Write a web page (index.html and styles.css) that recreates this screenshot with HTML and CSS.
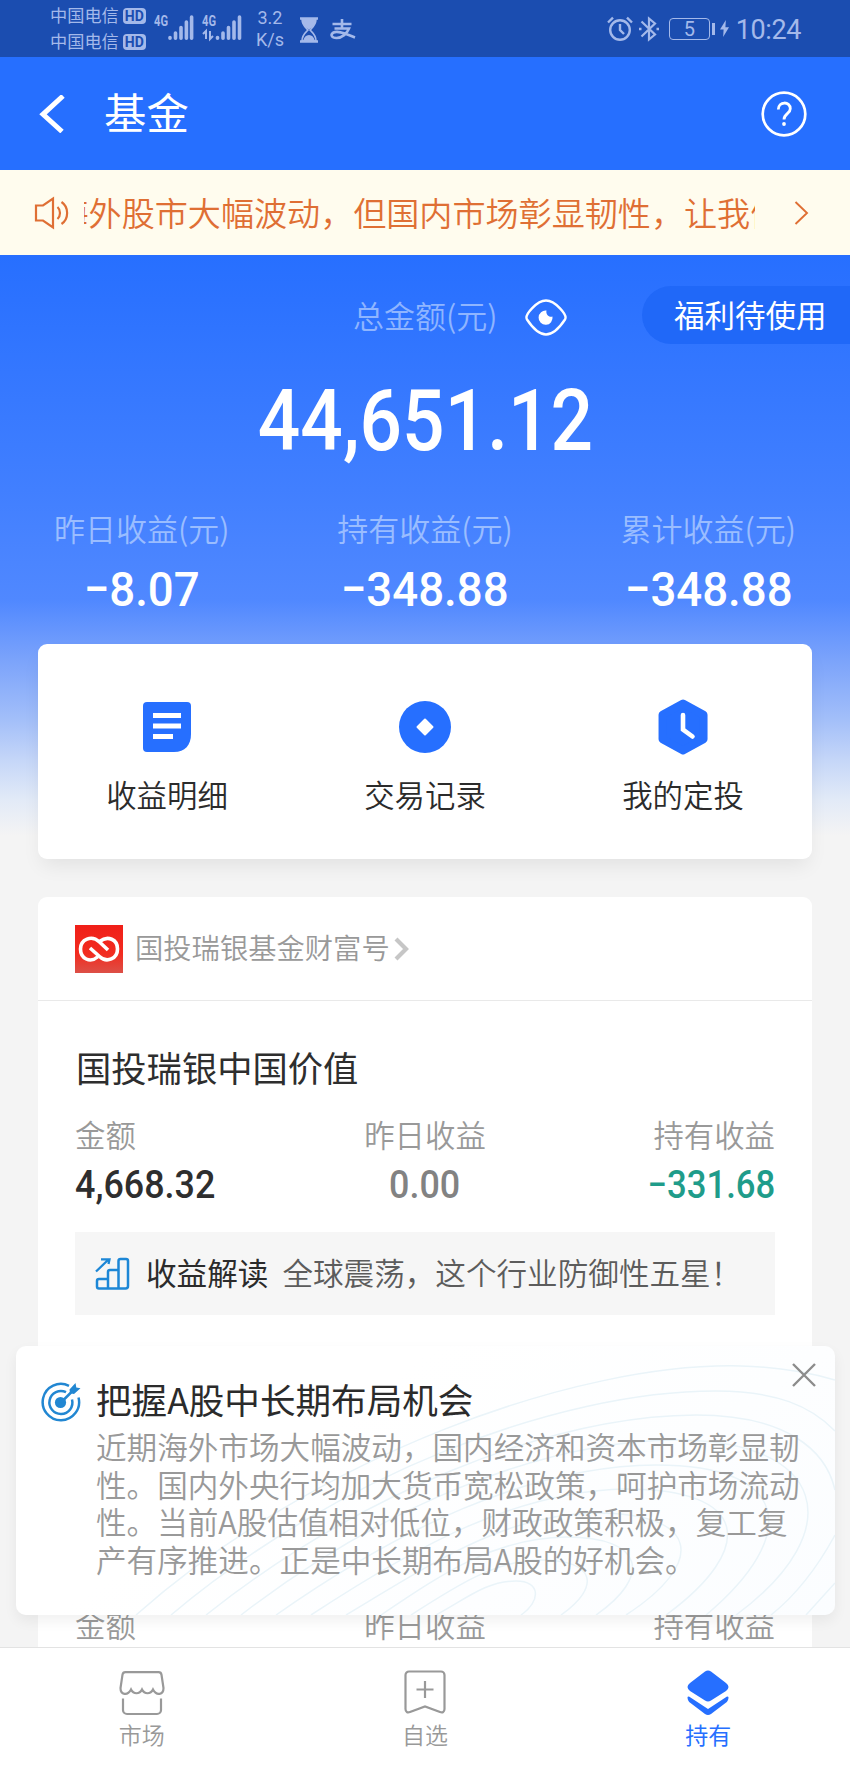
FILE: index.html
```html
<!DOCTYPE html>
<html lang="zh-CN">
<head>
<meta charset="utf-8">
<title>基金</title>
<link rel="stylesheet" href="styles.css">
</head>
<body>
<div class="phone">
  <header class="status">
    <div class="carriers">
      <div class="carrier">中国电信<span class="hd">HD</span></div>
      <div class="carrier">中国电信<span class="hd">HD</span></div>
    </div>
    <svg class="signals" width="90" height="30" viewBox="0 0 90 30">
      <g class="net"><text x="0" y="13" textLength="14" lengthAdjust="spacingAndGlyphs">4G</text><text x="48" y="13" textLength="14" lengthAdjust="spacingAndGlyphs">4G</text></g>
      <g stroke="currentColor" stroke-width="3.6" stroke-linecap="round">
        <path d="M16 24.6v.6M21.500 20v5.200M27 14.500v10.700M32.400 9v16.200M37.600 4v21.200"/>
        <path d="M63.500 24.600v.6M69 20v5.200M74.500 14.500v10.700M80 9v16.200M85.500 4v21.200"/>
      </g>
      <path d="M52 26v-8l-3 3M56 18v8l3-3" fill="none" stroke="currentColor" stroke-width="2"/>
    </svg>
    <div class="speed"><span>3.2</span><span>K/s</span></div>
    <svg class="hourglass" width="20" height="26" viewBox="0 0 20 26"><path d="M1 1.500h18M1 24.500h18" stroke="currentColor" stroke-width="2.400"/><path d="M3 2h14c0 6-3 8-6 11 3 3 6 5 6 11H3c0-6 3-8 6-11C6 10 3 8 3 2z" fill="none" stroke="currentColor" stroke-width="1.600"/><path d="M3 2h14c0 6-3 8-7 10.500C6 10 3 8 3 2zM4 24c1-4 3-6 6-6s5 2 6 6z" fill="currentColor"/></svg>
    <svg class="pay" width="26" height="22" viewBox="0 0 26 22" fill="none" stroke="currentColor" stroke-width="2.600"><path d="M2.500 5h19M12 0v9.500M4.500 9.500h14.500c-2 5-7 9.500-12.500 9.500-5 0-6.500-3.500-3-5.500 5-2.500 12 1.500 21.500 5"/></svg>
    <div class="status-right">
      <svg width="26" height="26" viewBox="0 0 26 26" fill="none" stroke="currentColor" stroke-width="2.400"><circle cx="13" cy="14" r="9.800"/><path d="M13 8v6l4 4M1 6.500l5-4.800M25 6.500l-5-4.800"/></svg>
      <svg class="bt" width="20" height="26" viewBox="0 0 20 26" fill="none" stroke="currentColor" stroke-width="2.200"><path d="M2.500 5.500L16 18.500l-6 5V2.500l6 5L2.500 20.500"/><path d="M0 13h2.500M17.500 13H20" stroke-width="2.600"/></svg>
      <div class="battery">5</div>
      <i class="battery-tip"></i>
      <svg class="bolt" width="9" height="19" viewBox="0 0 10 19"><path d="M6.500 0L0 10.500h4L3.500 19 10 8H6z" fill="currentColor"/></svg>
      <span class="clock">10:24</span>
    </div>
  </header>

  <nav class="nav">
    <svg width="26" height="38" viewBox="0 0 26 38"><path d="M24 1L4 19.300 23 36.500" fill="none" stroke="#fff" stroke-width="5"/></svg>
    <h1>基金</h1>
    <svg class="help" width="46" height="46" viewBox="0 0 46 46" fill="none" stroke="#fff"><circle cx="23" cy="23" r="21.300" stroke-width="2.700"/><path d="M17.300 18.500c0-8.500 12-8.500 12-.8 0 5-6.300 5-6.300 10.800" stroke-width="2.800"/><circle cx="23" cy="33" r="1.900" fill="#fff" stroke="none"/></svg>
  </nav>

  <div class="notice">
    <svg width="35" height="34" viewBox="0 0 35 34" fill="none" stroke="#df6f34" stroke-width="2.200"><path d="M2 9.500h7L19 2.500v29L9 24.500H2z"/><path d="M23.500 11c3.300 3 3.300 9 0 12M27.500 6c7.500 5 7.500 17 0 22"/></svg>
    <div class="ticker"><span>海外股市大幅波动，但国内市场彰显韧性，让我们</span></div>
    <svg class="more" width="15" height="24" viewBox="0 0 15 24"><path d="M1.500 1L13 12 1.500 23" fill="none" stroke="#df6f34" stroke-width="1.900"/></svg>
  </div>

  <main class="main">
    <section class="hero">
      <div class="total-row">
        <span class="total-label">总金额(元)</span>
        <svg width="42" height="38" viewBox="0 0 42 38"><path d="M2 20.500C-1 16 12 1.500 21 1.500S43 16 40 20.500C37 25 30 35.500 21 35.500S5 25 2 20.500z" fill="none" stroke="#fff" stroke-width="2.400"/><path d="M21.500 11.500a7 7.200 0 1 0 6 6c-3 1.500-7-2-6-6z" fill="#fff"/></svg>
      </div>
      <div class="benefit">福利待使用</div>
      <div class="amount"><span>44,651.12</span></div>
      <div class="stats">
        <div><label>昨日收益(元)</label><b>−8.07</b></div>
        <div><label>持有收益(元)</label><b>−348.88</b></div>
        <div><label>累计收益(元)</label><b>−348.88</b></div>
      </div>
    </section>

    <section class="card actions">
      <div class="action">
        <svg width="56" height="56" viewBox="0 0 56 56"><path d="M8 3h40a4 4 0 0 1 4 4v28c0 11-6 18-17 18H8a4 4 0 0 1-4-4V7a4 4 0 0 1 4-4z" fill="#266fff"/><path d="M14 16.500h28M14 27h28M14 37.500h20" stroke="#fff" stroke-width="5"/></svg>
        <span>收益明细</span>
      </div>
      <div class="action">
        <svg width="56" height="56" viewBox="0 0 56 56"><circle cx="28" cy="28" r="26" fill="#266fff"/><path d="M28 20.500l7.500 7.500-7.500 7.500-7.500-7.500z" fill="#fff" stroke="#fff" stroke-width="2" stroke-linejoin="round"/></svg>
        <span>交易记录</span>
      </div>
      <div class="action">
        <svg width="56" height="56" viewBox="0 0 56 56"><path d="M28 4l21 11.500v25L28 52 7 40.500v-25z" fill="#266fff" stroke="#266fff" stroke-width="8" stroke-linejoin="round" transform="translate(.6 .6) scale(.98)"/><path d="M28 16v14.500l9.500 7" fill="none" stroke="#fff" stroke-width="4.600" stroke-linecap="round"/></svg>
        <span>我的定投</span>
      </div>
    </section>

    <section class="card funds">
      <div class="brand">
        <svg class="logo" width="48" height="48" viewBox="0 0 48 48"><defs><linearGradient id="red" x2="0" y2="1"><stop offset="0" stop-color="#f01f18"/><stop offset=".6" stop-color="#f22c20"/><stop offset="1" stop-color="#dc5047"/></linearGradient></defs><rect width="48" height="48" fill="url(#red)"/><path d="M15 23l9.500 8.500C32 38.500 42.500 33.500 42.500 24S33 10 24.500 16.500M33 25l-8.500-8C16.500 9.500 5.500 14.500 5.500 24S15 38.500 22.500 32" fill="none" stroke="#fff" stroke-width="3.600"/></svg>
        <span>国投瑞银基金财富号</span>
        <svg class="brand-more" width="15" height="24" viewBox="0 0 15 24"><path d="M2 2l10 10L2 22" fill="none" stroke="#c6c6c6" stroke-width="4.200"/></svg>
      </div>
      <div class="fund">
        <h2>国投瑞银中国价值</h2>
        <div class="figures">
          <div><label>金额</label><b>4,668.32</b></div>
          <div class="mid"><label>昨日收益</label><b class="flat">0.00</b></div>
          <div class="end"><label>持有收益</label><b class="down">−331.68</b></div>
        </div>
        <div class="insight">
          <svg width="35" height="33" viewBox="0 0 35 33" fill="none" stroke="#1d87d6" stroke-width="2.500"><path d="M2 29.500V24a2 2 0 0 1 2-2h9V15a2 2 0 0 1 2-2h8.500V4a2 2 0 0 1 2-2H31a2 2 0 0 1 2 2v25a2.500 2.500 0 0 1-2.500 2.500H4A2 2 0 0 1 2 29.500zM13 22v9.500M23.500 13v18.500"/><path d="M1 14.500L13.500 2.500M6 2.300h8.500l-1 4.700" stroke-width="2.300"/></svg>
          <strong>收益解读</strong><span>全球震荡，这个行业防御性五星！</span>
        </div>
      </div>
      <div class="fund next">
        <div class="figures">
          <div><label>金额</label></div>
          <div class="mid"><label>昨日收益</label></div>
          <div class="end"><label>持有收益</label></div>
        </div>
      </div>
    </section>
  </main>

  <aside class="tip">
    <svg class="waves" width="819" height="269" viewBox="0 0 819 269" fill="none" stroke="#eaf4f9" stroke-width="1.500">
      <path d="M120 269C300 110 560 16 725 20c40 1 70 7 94 14"/>
      <path d="M155 269C320 130 540 45 700 45c60 0 95 15 119 40"/>
      <path d="M190 269C340 150 530 70 680 69c90 0 130 35 139 75"/>
      <path d="M225 269C360 165 520 95 660 94c150 0 175 90 60 175"/>
      <path d="M260 269C380 185 510 120 640 119c135 0 145 70 50 150"/>
      <path d="M295 269C400 200 500 145 610 143c125 0 130 60 40 126"/>
      <path d="M330 269C420 215 490 168 580 167c105 0 110 50 30 102"/>
      <path d="M365 269C430 225 480 192 550 191c80 0 85 40 30 78"/>
      <path d="M395 269C440 240 480 214 525 214c55 0 60 27 20 55"/>
      <path d="M420 269c30-16 50-34 80-34 25 0 25 20 5 34"/>
      <path d="M755 269c25-20 45-45 64-80M790 269l29-32"/>
    </svg>
    <svg class="target" width="40" height="40" viewBox="0 0 40 40" fill="none" stroke="#2287d2" stroke-width="2.500"><path d="M28 3.800A18.200 18.200 0 1 0 37.500 15.500"/><path d="M25 10.200A11.500 11.500 0 1 0 31 17.500"/><circle cx="19.500" cy="20.500" r="5.600" fill="#2287d2" stroke="none"/><path d="M20 20.500L33 7.500"/><path d="M28.500 7.500L34.500 1l.8 4.500 4.200.8L33 12l-4-.8z" fill="#2287d2" stroke="none"/></svg>
    <div class="tip-text">
      <h3>把握A股中长期布局机会</h3>
      <p>近期海外市场大幅波动，国内经济和资本市场彰显韧<br>性。国内外央行均加大货币宽松政策，呵护市场流动<br>性。当前A股估值相对低位，财政政策积极，复工复<br>产有序推进。正是中长期布局A股的好机会。</p>
    </div>
    <svg class="close" width="24" height="24" viewBox="0 0 24 24"><path d="M1 1l22 22M23 1L1 23" stroke="#8c8c8c" stroke-width="2.400"/></svg>
  </aside>

  <footer class="tabs">
    <div class="tab">
      <svg width="46" height="46" viewBox="0 0 46 46" fill="none" stroke="#999" stroke-width="2.200"><path d="M6.500 2.200h33a3 3 0 0 1 3 2.500L44.500 18c0 7-7 8-10.500 1.500-2.500 5-8.500 5-11 0-2.500 5-8.500 5-11 0C8.500 26 1.500 25 1.500 18L3.500 4.700a3 3 0 0 1 3-2.500zM4 28.500V40a4 4 0 0 0 4 4h30a4 4 0 0 0 4-4V28.500"/></svg>
      <span>市场</span>
    </div>
    <div class="tab">
      <svg width="46" height="46" viewBox="0 0 46 46" fill="none" stroke="#999" stroke-width="2.200"><path d="M7 1.500h32a3.500 3.500 0 0 1 3.500 3.500v34c0 3-2 4-4.500 3L23 36.500 8 42c-2.500 1-4.500 0-4.500-3V5A3.500 3.500 0 0 1 7 1.500zM23 11v17M14.500 19.500h17"/></svg>
      <span>自选</span>
    </div>
    <div class="tab on">
      <svg width="46" height="46" viewBox="0 0 46 46" fill="#266fff"><path d="M20 1.500q3-2 6 0l15 11.500q5 4 0 8L26 30.500q-3 2-6 0L5 21q-5-4 0-8z"/><path d="M2.500 27q1-1 3 .5L23 39l17.500-11.500q2-1.500 3-.5 0 4-3 6L26 44q-3 2-6 0L5.500 33q-3-2-3-6z"/></svg>
      <span>持有</span>
    </div>
  </footer>
</div>
</body>
</html>
```
FILE: styles.css
```css
* { box-sizing: border-box; }
body { margin: 0; font-family: "Noto Sans CJK SC", sans-serif; font-weight: 350; }
h1, h2, h3, p { margin: 0; font-weight: 400; }
svg { display: block; flex: none; }
.phone { position: relative; width: 850px; height: 1766px; overflow: hidden; display: flex; flex-direction: column; background: #f4f4f4; white-space: nowrap; }

.status { height: 57px; flex: none; display: flex; align-items: center; padding: 0 49px 0 50px; background: #1b4db0; color: #a4b9ea; font-family: Roboto, "Noto Sans CJK SC", sans-serif; }
.carriers { width: 96px; padding-top: 1px; }
.carrier { display: flex; align-items: center; height: 26px; font-size: 17.2px; line-height: 26px; gap: 4px; font-weight: 400; }
.hd { width: 23px; height: 16px; border-radius: 4px; background: #a4b9ea; color: #1b4db0; font-size: 14px; line-height: 16px; font-weight: 700; text-align: center; }
.signals { margin: 0 0 1px 8px; }
.net { font: 700 14px Roboto, sans-serif; fill: currentColor; }
.speed { width: 28px; margin-left: 12px; display: flex; flex-direction: column; align-items: center; font-size: 18px; line-height: 22px; font-weight: 400; padding-top: 1px; }
.hourglass { margin: 2px 0 0 15px; }
.pay { margin: 2px 0 0 11px; }
.status-right { margin-left: auto; display: flex; align-items: center; font-weight: 400; }
.bt { margin-left: 6px; }
.battery { width: 41px; height: 22px; margin-left: 10px; border: 1.5px solid #a4b9ea; border-radius: 4px; font-size: 20px; line-height: 21px; text-align: center; }
.battery-tip { width: 3px; height: 12px; margin-left: 2px; background: #a4b9ea; }
.bolt { margin-left: 5px; }
.clock { margin-left: 7px; font-size: 27px; line-height: 32px; letter-spacing: -.4px; padding-top: 2px; }

.nav { height: 113px; flex: none; display: flex; align-items: center; padding: 0 43px 0 39px; background: #266fff; color: #fff; }
.nav h1 { margin-left: 39px; font-size: 42.4px; line-height: 60px; font-weight: 400; padding-bottom: 6px; }
.help { margin-left: auto; }

.notice { height: 85px; flex: none; display: flex; align-items: center; padding: 0 41px 0 34px; background: #fffcee; color: #df6f34; }
.ticker { width: 671px; margin-left: 15px; overflow: hidden; display: flex; }
.ticker span { margin-left: -28.500px; font-size: 33.1px; line-height: 50px; padding-bottom: 1px; }
.more { margin-left: auto; }

.main { flex: 1; min-height: 0; overflow: hidden; padding: 0 38px; background: linear-gradient(#276fff 0, #417fff 235px, #5088ff 345px, #7ba3fb 405px, #a3bff9 465px, #c5d6f8 505px, #e2eaf7 545px, #f4f4f4 581px); }
.hero { position: relative; height: 389px; margin: 0 -38px; color: #fff; }
.total-row { display: flex; align-items: center; padding: 42px 0 0 353px; height: 84px; gap: 27px; }
.total-label { font-size: 31px; line-height: 42px; color: #8fb5ff; padding-bottom: 6px; }
.benefit { position: absolute; top: 31px; right: 0; width: 208px; height: 58px; border-radius: 29px 0 0 29px; padding-left: 32px; background: #2068f8; font-size: 30.5px; line-height: 57px; font-weight: 400; }
.amount { margin-top: 32px; height: 100px; display: flex; justify-content: center; font: 500 85px/100px Roboto, sans-serif; }
.amount span { transform: scaleX(.88); }
.stats { margin-top: 37px; display: grid; grid-template-columns: repeat(3, 1fr); text-align: center; }
.stats label { display: block; font-size: 31px; line-height: 40px; color: #9abdff; }
.stats b { display: block; margin-top: 12px; font: 500 48.500px/60px Roboto, sans-serif; transform: scaleX(.94); }

.card { background: #fff; border-radius: 9px; }
.actions { height: 215px; display: grid; grid-template-columns: repeat(3, 1fr); padding-top: 55px; box-shadow: 0 10px 20px -4px rgba(0,0,0,.08); color: #2b2b2b; }
.action { display: flex; flex-direction: column; align-items: center; font-size: 30.4px; line-height: 44px; gap: 17px; }

.funds { margin-top: 38px; height: 800px; }
.brand { height: 104px; display: flex; align-items: center; padding: 0 37px; border-bottom: 1px solid #e9e9e9; color: #999; font-size: 28.3px; line-height: 40px; }
.brand span { margin: -3px 0 0 12px; }
.brand-more { margin-left: 4px; }
.fund { padding: 42px 37px 0; }
.fund h2 { font-size: 35.3px; line-height: 50px; margin-top: -1px; padding-left: 1px; color: #2e2e2e; }
.figures { display: grid; grid-template-columns: repeat(3, 1fr); margin-top: 20px; }
.figures label { display: block; font-size: 30.4px; line-height: 44px; color: #999; }
.figures b { display: block; margin-top: 5px; font: 500 39px/48px Roboto, sans-serif; color: #2e2e2e; transform: scaleX(.92); transform-origin: left; }
.figures .mid { text-align: center; }
.figures .mid b { transform-origin: center; }
.figures .end { text-align: right; }
.figures .end b { transform: scaleX(.89); transform-origin: right; }
.figures .flat { color: #828282; }
.figures .down { color: #1f9c8a; }
.insight { height: 83px; margin-top: 23px; padding: 0 20px; display: flex; align-items: center; background: #f6f6f6; font-size: 30.6px; line-height: 44px; color: #5c5c5c; }
.insight strong { margin: -3px 14px 0 16px; font-weight: 400; color: #2b2b2b; }
.insight span { margin-top: -3px; }
.next { padding-top: 267px; }

.tip { position: absolute; left: 16px; top: 1346px; width: 819px; height: 269px; display: flex; align-items: flex-start; padding: 28px 19px 0 25px; border-radius: 10px; background: linear-gradient(145deg, #fff 35%, #fbfdff); box-shadow: 0 6px 14px rgba(0,0,0,.06); overflow: hidden; }
.waves { position: absolute; inset: 0; }
.target { margin-top: 8px; }
.tip-text { position: relative; margin-left: 15px; }
.tip h3 { font-size: 35.6px; line-height: 50px; color: #2b2b2b; }
.tip p { margin-top: 4px; font-size: 30.6px; line-height: 37.6px; font-weight: 350; color: #999; }
.close { position: absolute; top: 17px; right: 19px; }

.tabs { height: 119px; flex: none; display: grid; grid-template-columns: repeat(3, 1fr); padding-top: 22px; border-top: 1.500px solid #e3e3e3; background: #fff; color: #999; }
.tab { display: flex; flex-direction: column; align-items: center; font-size: 23px; line-height: 32px; gap: 2px; }
.tab.on { color: #266fff; font-weight: 400; }
```
